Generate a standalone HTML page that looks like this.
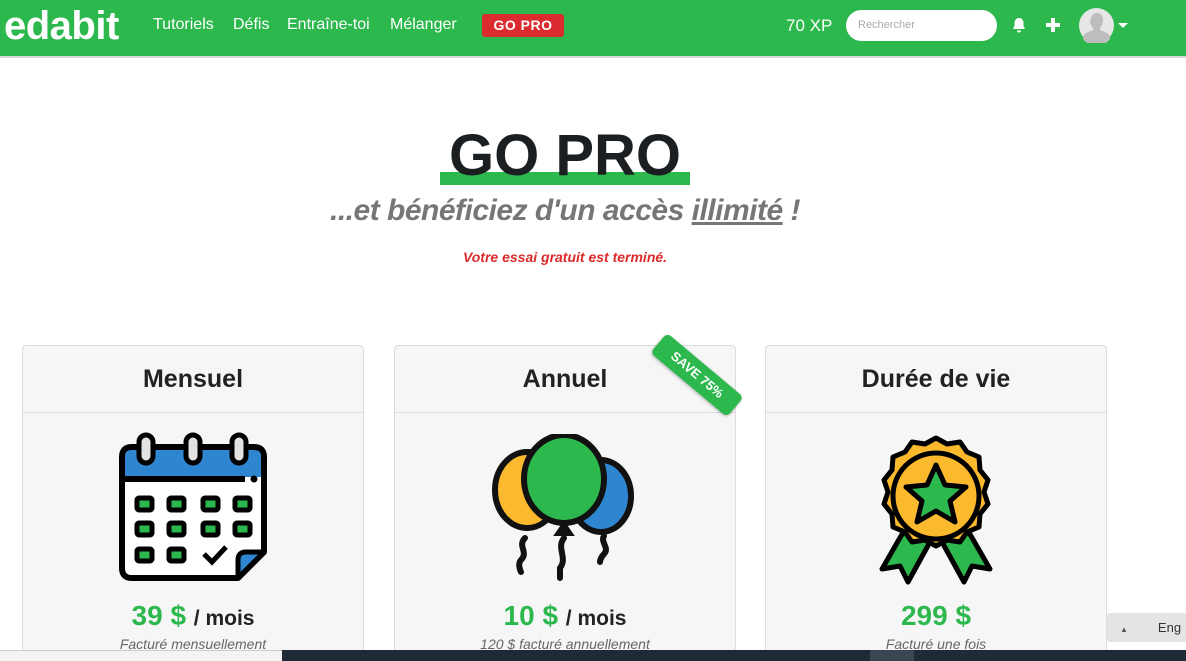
<!DOCTYPE html>
<html><head><meta charset="utf-8"><style>
*{box-sizing:border-box;margin:0;padding:0}
html,body{width:1186px;height:661px;overflow:hidden}
body{background:#fff;font-family:"Liberation Sans",sans-serif;position:relative}
.nav{position:absolute;left:0;top:0;width:1186px;height:58px;background:#2db84e;border-bottom:2px solid #d8d8d8}
.abs{position:absolute}
.logo{left:4px;top:4px;color:#fff;font-weight:bold;font-size:40px;letter-spacing:-0.5px}
.lk{top:16px;color:#fff;font-size:16px}
.badge{left:482px;top:14px;width:82px;height:23px;background:#dc2b2f;border-radius:3px;color:#fff;font-weight:bold;font-size:14px;text-align:center;line-height:23px;letter-spacing:.5px}
.search{left:846px;top:10px;width:151px;height:31px;background:#fff;border-radius:16px;font-size:11px;color:#aaa;padding:9px 12px}
.card{position:absolute;top:345px;width:342px;height:330px;background:#f6f6f6;border:1px solid #dcdcdc;border-radius:4px;overflow:hidden}
.card h3{height:67px;border-bottom:1px solid #dcdcdc;text-align:center;font-size:25px;font-weight:bold;color:#222;line-height:67px}
.price{position:absolute;top:254px;width:100%;text-align:center;font-size:28px;font-weight:bold;color:#2db84e}
.price span{color:#222;font-size:21px}
.sub{position:absolute;top:290px;width:100%;text-align:center;font-size:14px;font-style:italic;color:#666}
.icon{position:absolute;left:50%;top:86px;transform:translateX(-50%)}
</style></head><body>
<div class="nav">
<div class="abs logo">edabit</div>
<div class="abs lk" style="left:153px">Tutoriels</div>
<div class="abs lk" style="left:233px">Défis</div>
<div class="abs lk" style="left:287px">Entraîne-toi</div>
<div class="abs lk" style="left:390px">Mélanger</div>
<div class="abs badge">GO PRO</div>
<div class="abs lk" style="left:786px;font-size:17px">70 XP</div>
<div class="abs search">Rechercher</div>
<svg class="abs" style="left:1012px;top:17px" width="14" height="16" viewBox="0 0 14 16"><path d="M7 1c-3 0-4.5 2.5-4.5 5v3L1 12h12l-1.5-3V6C11.5 3.5 10 1 7 1z M5 13.5a2 2 0 0 0 4 0z" fill="#fff"/></svg>
<svg class="abs" style="left:1046px;top:18px" width="14" height="14"><path d="M5 0h4v5h5v4H9v5H5V9H0V5h5z" fill="#fff"/></svg>
<svg class="abs" style="left:1079px;top:8px" width="35" height="35" viewBox="0 0 35 35"><circle cx="17.5" cy="17.5" r="17.5" fill="#e6e6e6"/><path d="M12 12c0-5 3-7 6-7s6 2 6 7c0 4-2 7-3 8v2l7 3c2 1 3 4 3 6a17 17 0 0 1-27 0c0-2 1-5 3-6l7-3v-2c-1-1-3-4-3-8z" fill="#bdbdbd"/></svg>
<svg class="abs" style="left:1118px;top:23px" width="10" height="6"><path d="M0 0h10L5 5z" fill="#fff"/></svg>
</div>

<div class="abs" style="left:440px;top:172px;width:250px;height:13px;background:#2db84e"></div>
<div class="abs" style="left:0;top:122px;width:1130px;text-align:center;font-size:58px;font-weight:bold;color:#1b1f22">GO PRO</div>
<div class="abs" style="left:0;top:194px;width:1130px;text-align:center;font-size:30px;font-weight:bold;font-style:italic;color:#767676;letter-spacing:-0.5px">...et bénéficiez d'un accès <u>illimité</u> !</div>
<div class="abs" style="left:0;top:249px;width:1130px;text-align:center;font-size:14px;font-weight:bold;font-style:italic;color:#dc2a2a">Votre essai gratuit est terminé.</div>

<div class="card" style="left:22px"><h3>Mensuel</h3>
<svg class="icon" width="152" height="152" viewBox="0 0 152 152">
<path d="M15 15h122q10 0 10 10v95l-26 26H15q-10 0-10-10V25q0-10 10-10z" fill="#fff"/>
<path d="M8 45V25q0-8 8-8h120q8 0 8 8v20z" fill="#2e86d0"/>
<path d="M15 15h122q10 0 10 10v95l-26 26H15q-10 0-10-10V25q0-10 10-10z" fill="none" stroke="#000" stroke-width="6" stroke-linejoin="round"/>
<line x1="8" y1="47" x2="128" y2="47" stroke="#000" stroke-width="6"/><circle cx="137" cy="47" r="3.5"/>
<g fill="#e2e2e2" stroke="#000" stroke-width="5"><rect x="22" y="3" width="14" height="28" rx="7"/><rect x="69" y="3" width="14" height="28" rx="7"/><rect x="115" y="3" width="14" height="28" rx="7"/></g>
<g fill="#2db84e" stroke="#000" stroke-width="5"><rect x="20" y="66" width="15" height="12" rx="2"/><rect x="52" y="66" width="15" height="12" rx="2"/><rect x="86" y="66" width="15" height="12" rx="2"/><rect x="118" y="66" width="15" height="12" rx="2"/><rect x="20" y="91" width="15" height="12" rx="2"/><rect x="52" y="91" width="15" height="12" rx="2"/><rect x="86" y="91" width="15" height="12" rx="2"/><rect x="118" y="91" width="15" height="12" rx="2"/><rect x="20" y="117" width="15" height="12" rx="2"/><rect x="52" y="117" width="15" height="12" rx="2"/></g>
<path d="M87 122l8 8 14-15" fill="none" stroke="#000" stroke-width="5"/>
<path d="M121 146v-18q0-8 8-8h18z" fill="#2e86d0" stroke="#000" stroke-width="5" stroke-linejoin="round"/>
</svg>
<div class="price">39 $ <span>/ mois</span></div><div class="sub">Facturé mensuellement</div></div>

<div class="card" style="left:394px"><h3>Annuel</h3>
<svg class="icon" width="152" height="152" viewBox="0 0 152 152" style="top:88px">
<g stroke="#111" stroke-width="6" fill="none" stroke-linecap="round"><path d="M36 104c-8 8 4 14-4 22-4 4 0 12 0 12"/><path d="M75 104c-8 10 4 20-4 30 0 4 0 10 0 10"/><path d="M115 102c-4 6 6 12 0 18-4 4-4 8-4 8"/></g>
<ellipse cx="38" cy="56" rx="32" ry="38" fill="#fbb92e" stroke="#111" stroke-width="6"/>
<ellipse cx="112" cy="62" rx="30" ry="36" fill="#2e86d0" stroke="#111" stroke-width="6"/>
<ellipse cx="75" cy="45" rx="40" ry="44" fill="#2db84e" stroke="#111" stroke-width="6"/>
<path d="M68 100h14l-7-10z" fill="#111" stroke="#111" stroke-width="4"/>
</svg>
<div class="price">10 $ <span>/ mois</span></div><div class="sub">120 $ facturé annuellement</div></div>

<div class="abs" style="left:647px;top:362px;width:100px;height:26px;background:#2db84e;border-radius:5px;transform:rotate(40deg);color:#fff;font-weight:bold;font-size:13px;text-align:center;line-height:26px;box-shadow:0 1px 3px rgba(0,0,0,.3)">SAVE 75%</div>

<div class="card" style="left:765px"><h3>Durée de vie</h3>
<svg class="icon" width="152" height="152" viewBox="0 0 152 152" style="top:88px">
<g stroke="#000" stroke-width="5" stroke-linejoin="round" fill="#2db84e"><path d="M45 95L22 135l18-3 8 16 22-40z"/><path d="M107 95l23 40-18-3-8 16-22-40z"/></g>
<path d="M76 4l11 6 13-2 7 10 12 5 1 13 8 10-4 12 4 12-8 10-1 13-12 5-7 10-13-2-11 6-11-6-13 2-7-10-12-5-1-13-8-10 4-12-4-12 8-10 1-13 12-5 7-10 13 2z" fill="#fbb92e" stroke="#000" stroke-width="5" stroke-linejoin="round"/>
<circle cx="76" cy="62" r="43" fill="none" stroke="#000" stroke-width="5"/>
<path d="M76 31l9 20 21 2-16 14 5 21-19-11-19 11 5-21-16-14 21-2z" fill="#2db84e" stroke="#000" stroke-width="5" stroke-linejoin="round"/>
</svg>
<div class="price">299 $</div><div class="sub">Facturé une fois</div></div>

<div class="abs" style="left:1107px;top:613px;width:79px;height:29px;background:#e4e4e4;border-radius:3px 0 0 3px;font-size:13px;color:#333;line-height:29px"><span style="font-size:8px;color:#555;margin-left:13px">▲</span><span style="margin-left:30px">Eng</span></div>
<div class="abs" style="left:0;top:650px;width:282px;height:11px;background:#f3f3f3;border-top:1px solid #ccc"></div>
<div class="abs" style="left:282px;top:650px;width:904px;height:11px;background:#1e2b37"></div>
<div class="abs" style="left:870px;top:650px;width:44px;height:11px;background:#3a4752"></div>
</body></html>
